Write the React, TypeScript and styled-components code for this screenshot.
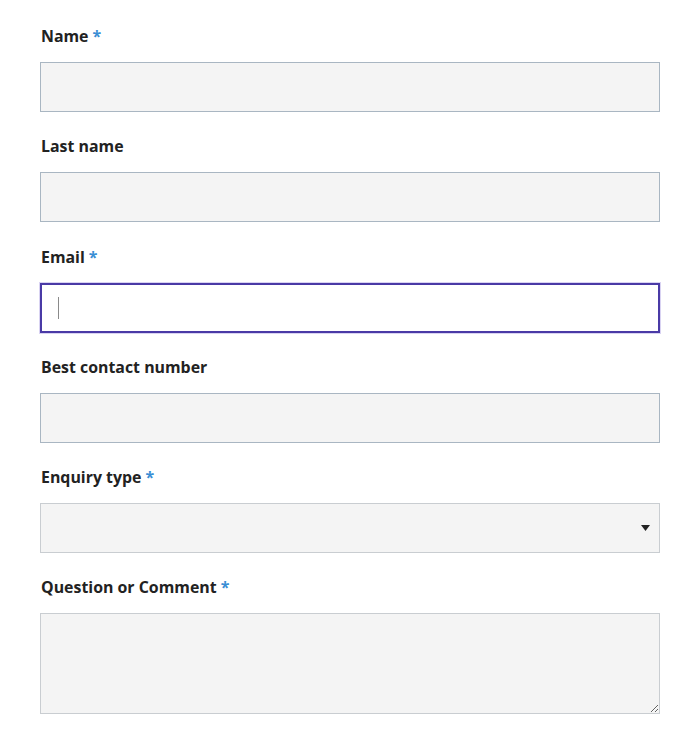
import React from 'react';
import styled, { createGlobalStyle } from 'styled-components';

const GlobalStyle = createGlobalStyle`
    body {
        margin: 0;
        background: #ffffff;
        font-family: "Open Sans", "Liberation Sans", sans-serif;
    }
`;

const Form = styled.form`
    width: 620px;
    padding: 25px 0 0 40px;
    display: flex;
    flex-direction: column;
`;

const Field = styled.div`
    display: flex;
    flex-direction: column;
    margin-bottom: 23.25px;
`;

const Label = styled.label`
    height: 22px;
    line-height: 22px;
    margin: 0 0 15px 1px;
    font-size: 15.9px;
    font-weight: 700;
    color: #222222;
`;

const Required = styled.span`
    color: #3a8ed4;
    margin-left: 4px;
`;

const InputWrap = styled.div`
    position: relative;
`;

const TextInput = styled.input<{ $focused?: boolean }>`
    box-sizing: border-box;
    width: 620px;
    height: 50px;
    margin: 0;
    padding: 0 16px;
    font-family: inherit;
    font-size: 15px;
    outline: none;
    background: ${({ $focused }) => ($focused ? '#ffffff' : '#f4f4f4')};
    border: ${({ $focused }) => ($focused ? '2px solid #4a3aa6' : '1px solid #a9b6c2')};
    box-shadow: ${({ $focused }) => ($focused ? '0 0 0 1px #d9d3f2' : 'none')};
`;

// 点滅カーソルの代わり
const Caret = styled.span`
    position: absolute;
    left: 18px;
    top: 14px;
    width: 1px;
    height: 22px;
    background: #8a8a8a;
`;

const Select = styled.select`
    box-sizing: border-box;
    width: 620px;
    height: 50px;
    margin: 0;
    padding: 0 16px;
    appearance: none;
    background: #f4f4f4;
    border: 1px solid #c9cdd1;
    border-radius: 0;
    font-family: inherit;
    font-size: 15px;
    outline: none;
`;

const Arrow = styled.svg`
    position: absolute;
    right: 10px;
    top: 22px;
    pointer-events: none;
`;

const TextArea = styled.textarea`
    box-sizing: border-box;
    width: 620px;
    height: 101px;
    margin: 0;
    padding: 12px 16px;
    display: block;
    resize: vertical;
    background: #f4f4f4;
    border: 1px solid #c9cdd1;
    font-family: inherit;
    font-size: 15px;
    outline: none;
`;

type FieldProps = {
    label: string;
    required?: boolean;
    children: React.ReactNode;
};

const FormField: React.FC<FieldProps> = ({ label, required, children }) => (
    <Field>
        <Label>
            {label}
            {required && <Required>*</Required>}
        </Label>
        {children}
    </Field>
);

export default function App() {
    return (
        <>
            <GlobalStyle />
            <Form>
                <FormField label="Name" required>
                    <TextInput type="text" />
                </FormField>
                <FormField label="Last name">
                    <TextInput type="text" />
                </FormField>
                <FormField label="Email" required>
                    <InputWrap>
                        <TextInput type="email" $focused />
                        <Caret />
                    </InputWrap>
                </FormField>
                <FormField label="Best contact number">
                    <TextInput type="tel" />
                </FormField>
                <FormField label="Enquiry type" required>
                    <InputWrap>
                        <Select defaultValue="">
                            <option value=""></option>
                            <option value="general">General</option>
                        </Select>
                        <Arrow width="9" height="6" viewBox="0 0 9 6">
                            <path d="M0 0 H9 L4.5 6 Z" fill="#222222" />
                        </Arrow>
                    </InputWrap>
                </FormField>
                <FormField label="Question or Comment" required>
                    <TextArea />
                </FormField>
            </Form>
        </>
    );
}
